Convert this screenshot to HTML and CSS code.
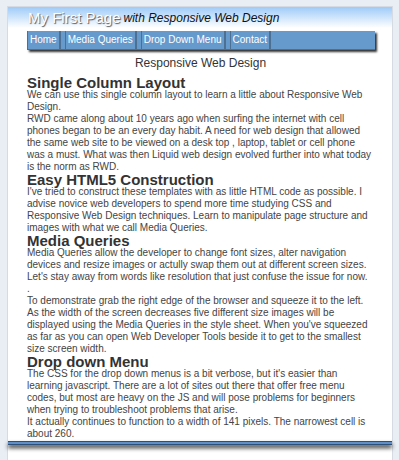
FILE: index.html
```html
<!DOCTYPE html>
<html>
<head>
<meta charset="utf-8">
<link rel="stylesheet" href="styles.css">
</head>
<body>
<div class="wrap">
  <header class="top">
    <span class="title">My First Page</span>
    <span class="sub">with Responsive Web Design</span>
  </header>
  <nav class="nav">
    <a class="item">Home</a><a class="item">Media Queries</a><a class="item">Drop Down Menu</a><a class="item">Contact</a>
  </nav>
  <main class="content">
    <div class="lead">Responsive Web Design</div>
    <h2>Single Column Layout</h2>
    <p>We can use this single column layout to learn a little about Responsive Web Design.<br>RWD came along about 10 years ago when surfing the internet with cell phones began to be an every day habit. A need for web design that allowed the same web site to be viewed on a desk top , laptop, tablet or cell phone was a must. What was then Liquid web design evolved further into what today is the norm as RWD.</p>
    <h2>Easy HTML5 Construction</h2>
    <p>I've tried to construct these templates with as little HTML code as possible. I advise novice web developers to spend more time studying CSS and Responsive Web Design techniques. Learn to manipulate page structure and images with what we call Media Queries.</p>
    <h2>Media Queries</h2>
    <p>Media Queries allow the developer to change font sizes, alter navigation devices and resize images or actully swap them out at different screen sizes. Let's stay away from words like resolution that just confuse the issue for now.<br>.<br>To demonstrate grab the right edge of the browser and squeeze it to the left. As the width of the screen decreases five different size images will be displayed using the Media Queries in the style sheet. When you've squeezed as far as you can open Web Developer Tools beside it to get to the smallest size screen width.</p>
    <h2>Drop down Menu</h2>
    <p>The CSS for the drop down menus is a bit verbose, but it's easier than learning javascript. There are a lot of sites out there that offer free menu codes, but most are heavy on the JS and will pose problems for beginners when trying to troubleshoot problems that arise.<br>It actually continues to function to a width of 141 pixels. The narrowest cell is about 260.</p>
  </main>
  <footer class="foot"></footer>
</div>
</body>
</html>
```
FILE: styles.css
```css
html, body {
  margin: 0;
  padding: 0;
}
body {
  background: #e9edf4;
  font-family: "Liberation Sans", Arial, sans-serif;
  padding-top: 6px;
  height: 460px;
  overflow: hidden;
}
.wrap {
  margin: 0 6px 0 7px;
  background: #fff;
  border: 1px solid #d6dbe3;
  border-bottom: none;
  height: 460px;
}
.top {
  height: 21px;
  background: linear-gradient(#9ecbf8, #ffffff);
  padding-left: 20px;
  display: flex;
  align-items: center;
  gap: 3px;
  white-space: nowrap;
}
.title {
  color: #fff;
  font-size: 15px;
  text-shadow: 1px 1px 1px #555;
}
.sub {
  font-style: italic;
  font-size: 12px;
  color: #111;
}
.nav {
  margin: 3px 17px 0 19px;
  height: 19px;
  background: #6699cc;
  display: flex;
  box-shadow: 2px 2px 2px #333;
  border-bottom: 1px solid #4f6f90;
  box-sizing: border-box;
}
.item {
  color: #fff;
  font-size: 10px;
  padding: 0 2px;
  line-height: 18px;
  border-left: 1px solid #4d6f92;
  border-right: 2px solid #4d6f92;
  margin-right: 4px;
}
.content {
  padding: 0 18px 0 19px;
  color: #444;
}
.lead {
  text-align: center;
  font-size: 12px;
  color: #333;
  margin-top: 6px;
  margin-bottom: 6px;
  line-height: 14px;
}
h2 {
  margin: 0;
  font-size: 15px;
  line-height: 13px;
  color: #333;
}
p {
  margin: 0;
  font-size: 10px;
  line-height: 12px;
}
.foot {
  margin-top: 1px;
  height: 2px;
  background: #5f8fc6;
  border-top: 1px solid #2e4f78;
  border-bottom: 1px solid #2e4f78;
  box-shadow: 0 3px 4px #333;
}
```
